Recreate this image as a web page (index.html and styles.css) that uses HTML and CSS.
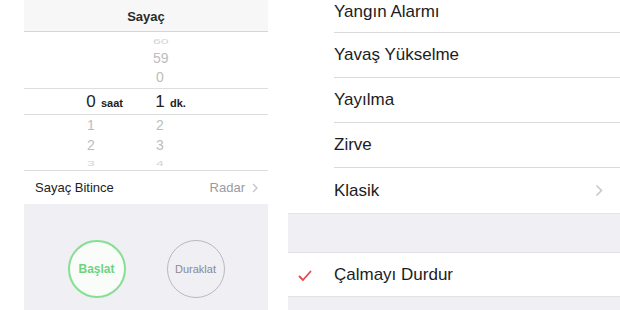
FILE: index.html
```html
<!DOCTYPE html>
<html lang="tr">
<head>
<meta charset="utf-8">
<title>Sayaç</title>
<link rel="stylesheet" href="styles.css">
</head>
<body>
<div class="page">
  <section class="timer">
    <header class="timer-head">Sayaç</header>
    <div class="picker">
      <div class="pick-row r-a"><span class="num"></span><span></span><span class="num faint squash2">60</span><span></span></div>
      <div class="pick-row r-b"><span class="num"></span><span></span><span class="num light">59</span><span></span></div>
      <div class="pick-row r-c"><span class="num"></span><span></span><span class="num light">0</span><span></span></div>
      <div class="pick-row sel"><span class="num big">0</span><span class="unit">saat</span><span class="num big">1</span><span class="unit">dk.</span></div>
      <div class="pick-row r-d"><span class="num light">1</span><span></span><span class="num light">2</span><span></span></div>
      <div class="pick-row r-e"><span class="num light">2</span><span></span><span class="num light">3</span><span></span></div>
      <div class="pick-row r-f"><span class="num faint squash">3</span><span></span><span class="num faint squash">4</span><span></span></div>
    </div>
    <div class="end-row">
      <span>Sayaç Bitince</span>
      <span class="end-val">Radar <svg class="chev-s" width="6" height="10" viewBox="0 0 6 10"><path d="M1 1l4 4-4 4" fill="none" stroke="#c4c4c9" stroke-width="1.3"/></svg></span>
    </div>
    <div class="controls">
      <div class="circle start">Başlat</div>
      <div class="circle pause">Duraklat</div>
    </div>
  </section>

  <section class="tones">
    <div class="tone first"><span class="tone-inner">Yangın Alarmı</span></div>
    <div class="tone"><span class="tone-inner">Yavaş Yükselme</span></div>
    <div class="tone"><span class="tone-inner">Yayılma</span></div>
    <div class="tone"><span class="tone-inner">Zirve</span></div>
    <div class="tone last"><span class="tone-inner">Klasik<svg class="chev" width="8" height="13" viewBox="0 0 8 13"><path d="M1.5 1.5l5 5-5 5" fill="none" stroke="#c7c7cc" stroke-width="1.6"/></svg></span></div>
    <div class="gap"></div>
    <div class="tone stop">
      <svg class="check" width="14" height="12" viewBox="0 0 14 12"><path d="M1.5 6.5l3.5 3.5 7.5-8.5" fill="none" stroke="#e5484f" stroke-width="1.8" stroke-linecap="round" stroke-linejoin="round"/></svg>
      <span class="tone-inner">Çalmayı Durdur</span>
    </div>
    <div class="gap rest"></div>
  </section>
</div>
</body>
</html>
```
FILE: styles.css
```css
* { box-sizing: border-box; margin: 0; padding: 0; }
html, body { width: 620px; height: 310px; overflow: hidden; background: #fff; }
body { font-family: "Liberation Sans", Arial, sans-serif; color: #1c1c1c; }

.page { display: flex; height: 310px; padding-left: 24px; gap: 20px; }

/* left: timer screen */
.timer { width: 244px; display: flex; flex-direction: column; background: #fff; }
.timer-head {
  height: 32px; background: #f7f7f7; border-bottom: 1px solid #d6d6d6;
  display: flex; align-items: center; justify-content: center;
  font-weight: bold; font-size: 13px; color: #2a2a2a; padding-top: 2px;
}
.picker { display: flex; flex-direction: column; border-bottom: 1px solid #dedede; height: 139px; }
.pick-row {
  display: grid; grid-template-columns: 60px 14px 55px 14px 1fr;
  align-items: center; font-size: 14px;
}
.pick-row > span:first-child { grid-column: 2; }
.num { text-align: center; }
.light { color: #bdbdbd; }
.faint { color: #d4d4d4; }
.squash { display: inline-block; transform: scaleY(0.55); }
.squash2 { display: inline-block; transform: scaleY(0.5); }
.r-a { height: 18px; }
.r-b { height: 16px; }
.r-c { height: 22px; }
.sel { height: 27px; border-top: 1px solid #dedede; border-bottom: 1px solid #dedede; }
.r-d { height: 19px; }
.r-e { height: 21px; }
.r-f { height: 14px; }
.big { font-size: 17px; color: #222; }
.unit { font-size: 11px; font-weight: bold; color: #222; padding-left: 3px; padding-top: 2px; }

.end-row {
  height: 33px; display: flex; align-items: center; justify-content: space-between;
  padding: 0 10px 0 11px; font-size: 13px; color: #222;
}
.end-val { color: #9a9a9f; display: flex; align-items: center; gap: 7px; }

.controls {
  flex: 1; background: #efeff4; display: flex; justify-content: center;
  align-items: flex-start; gap: 41px; padding-top: 36px;
}
.circle {
  width: 58px; height: 58px; border-radius: 50%;
  display: flex; align-items: center; justify-content: center;
}
.start { border: 2px solid #86df92; background: #fafcfa; color: #6dd47e; font-size: 12px; font-weight: bold; }
.pause { border: 1.5px solid #b9b9c1; color: #8a8a90; font-size: 11px; }

/* right: tone list */
.tones { flex: 1; display: flex; flex-direction: column; background: #fff; }
.tone {
  height: 45px; display: flex; align-items: center; padding-left: 46px;
  font-size: 17px; color: #1c1c1c;
}
.tone-inner {
  flex: 1; height: 100%; display: flex; align-items: center;
  border-bottom: 1px solid #dadada; padding-right: 17px; justify-content: space-between;
}
.tone.first { height: 33px; }
.tone.first .tone-inner { align-items: flex-start; padding-top: 2px; }
.tone.last .tone-inner { border-bottom: none; }
.tone.stop { position: relative; border-top: 1px solid #e2e2e6; border-bottom: 1px solid #e2e2e6; }
.tone.stop .tone-inner { border-bottom: none; }
.check { position: absolute; left: 10px; top: 17px; }
.gap { height: 39px; background: #efeff4; border-top: 1px solid #e4e4e8; }
.gap.rest { flex: 1; border-top: none; }
```
